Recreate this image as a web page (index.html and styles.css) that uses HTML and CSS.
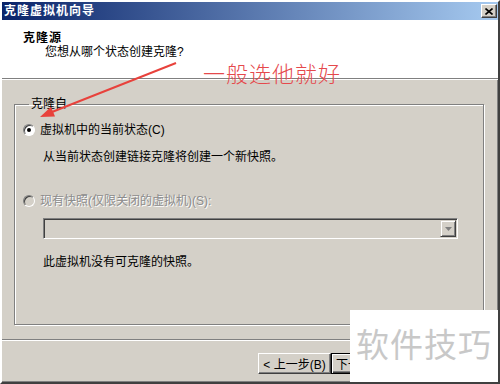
FILE: index.html
```html
<!DOCTYPE html>
<html lang="zh-CN">
<head>
  <meta charset="UTF-8" />
  <title>克隆虚拟机向导</title>
  <link rel="stylesheet" href="styles.css">
</head>
<body>
  <div class="window">
    <div class="titlebar">
      <span class="title">克隆虚拟机向导</span>
      <button class="close-btn">
        <svg width="8" height="7" viewBox="0 0 8 7"><path d="M0.5 0.5 L7.5 6.5 M7.5 0.5 L0.5 6.5" stroke="#000" stroke-width="1.6"/></svg>
      </button>
    </div>

    <div class="header">
      <div class="header-title">克隆源</div>
      <div class="header-sub">您想从哪个状态创建克隆?</div>
    </div>
    <div class="sep"></div>

    <div class="content">
      <fieldset class="group">
        <legend>克隆自</legend>
        <div class="option">
          <span class="radio checked"></span>
          <span>虚拟机中的当前状态(C)</span>
        </div>
        <p class="hint hint-first">从当前状态创建链接克隆将创建一个新快照。</p>
        <div class="option option-second disabled">
          <span class="radio"></span>
          <span>现有快照(仅限关闭的虚拟机)(S):</span>
        </div>
        <div class="combo">
          <span class="combo-field"></span>
          <span class="combo-btn">
            <svg width="7" height="4" viewBox="0 0 7 4"><path d="M0 0 H7 L3.5 4 Z" fill="#808080"/></svg>
          </span>
        </div>
        <p class="hint hint-last">此虚拟机没有可克隆的快照。</p>
      </fieldset>
    </div>

    <div class="sep sep-bottom"></div>
    <div class="buttons">
      <button class="btn">&lt; 上一步(B)</button>
      <button class="btn btn-default">下一步</button>
    </div>

    <div class="annotation">一般选他就好</div>
    <svg class="arrow" width="500" height="384" viewBox="0 0 500 384">
      <line x1="176" y1="63" x2="52" y2="112" stroke="#e8423c" stroke-width="2"/>
      <polygon points="40,117 55,116.5 51,106.8" fill="#e8423c"/>
    </svg>
    <div class="watermark">软件技巧</div>
  </div>
</body>
</html>
```

FILE: styles.css
```css
body {
  margin: 0;
  padding: 0;
  font-family: 'Liberation Sans', 'Noto Sans CJK SC', sans-serif;
  font-size: 12px;
  color: #000;
  background: #d4d0c8;
}

.window {
  position: relative;
  width: 500px;
  height: 384px;
  box-sizing: border-box;
  display: flex;
  flex-direction: column;
  background: #d4d0c8;
  border: 2px solid;
  border-color: #fff #404040 #404040 #fff;
  box-shadow: inset -1px -1px 0 #808080;
  overflow: hidden;
}

.titlebar {
  height: 18px;
  flex-shrink: 0;
  display: flex;
  align-items: center;
  justify-content: space-between;
  padding: 0 1px 0 2px;
  background: linear-gradient(to right, #0a246a, #a6caf0);
}

.title {
  color: #fff;
  font-weight: bold;
  letter-spacing: 1px;
  line-height: 14px;
}

.close-btn {
  width: 16px;
  height: 14px;
  padding: 0;
  display: flex;
  align-items: center;
  justify-content: center;
  background: #d4d0c8;
  border: 1px solid;
  border-color: #fff #404040 #404040 #fff;
  box-shadow: inset -1px -1px 0 #808080;
}

.header {
  height: 58px;
  box-sizing: border-box;
  padding: 11px 0 0 21px;
  background: #fff;
  line-height: 14px;
}

.header-title {
  font-weight: bold;
  letter-spacing: 1px;
}

.header-sub {
  margin-left: 22px;
}

.sep {
  flex-shrink: 0;
  border-top: 1px solid #808080;
  border-bottom: 1px solid #fff;
}

.content {
  padding: 0 14px 0 12px;
}

.group {
  margin: 17px 0 0 0;
  padding: 11px 0 55px 8px;
  border: 1px solid #808080;
  box-shadow: inset 1px 1px 0 #fff, 1px 1px 0 #fff;
  line-height: 14px;
}

.group legend {
  margin-left: 6px;
  padding: 0 2px;
  line-height: 14px;
}

.option {
  display: flex;
  align-items: center;
  gap: 5px;
  height: 16px;
}

.option-second {
  margin-top: 29px;
}

.disabled {
  color: #8c8c8c;
  text-shadow: 1px 1px 0 #fff;
}

.radio {
  position: relative;
  width: 12px;
  height: 12px;
  box-sizing: border-box;
  border-radius: 50%;
  background: #fff;
  border: 1px solid;
  border-color: #808080 #fff #fff #808080;
  box-shadow: inset 1px 1px 0 #404040;
}

.disabled .radio {
  background: #d4d0c8;
}

.radio.checked::after {
  content: '';
  position: absolute;
  left: 3px;
  top: 3px;
  width: 4px;
  height: 4px;
  border-radius: 50%;
  background: #000;
}

.hint {
  margin: 0 0 0 20px;
}

.hint-first {
  margin-top: 12px;
}

.hint-last {
  margin-top: 16px;
}

.combo {
  display: flex;
  width: 415px;
  height: 21px;
  box-sizing: border-box;
  margin: 9px 0 0 20px;
  padding: 1px;
  border: 1px solid;
  border-color: #808080 #fff #fff #808080;
  box-shadow: inset 1px 1px 0 #404040;
  background: #d4d0c8;
}

.combo-field {
  flex: 1;
}

.combo-btn {
  width: 16px;
  height: 17px;
  box-sizing: border-box;
  display: flex;
  align-items: center;
  justify-content: center;
  border: 1px solid;
  border-color: #d4d0c8 #404040 #404040 #d4d0c8;
  box-shadow: inset 1px 1px 0 #fff, inset -1px -1px 0 #808080;
}

.sep-bottom {
  margin-top: 14px;
}

.buttons {
  display: flex;
  justify-content: flex-end;
  padding: 12px 94px 0 0;
}

.btn {
  width: 73px;
  height: 21px;
  padding: 0;
  font-family: 'Liberation Sans', 'Noto Sans CJK SC', sans-serif;
  font-size: 12px;
  color: #000;
  background: #d4d0c8;
  border: 1px solid;
  border-color: #fff #404040 #404040 #fff;
  box-shadow: inset -1px -1px 0 #808080;
}

.btn-default {
  text-align: left;
  padding-left: 4px;
  border-color: #000;
  box-shadow: inset 1px 1px 0 #fff, inset -1px -1px 0 #404040, inset -2px -2px 0 #808080;
}

.annotation {
  position: absolute;
  left: 201px;
  top: 58px;
  font-family: 'Noto Sans CJK SC', sans-serif;
  font-size: 22px;
  font-weight: 300;
  line-height: 24px;
  letter-spacing: 1px;
  color: #e5494c;
}

.arrow {
  position: absolute;
  left: -2px;
  top: -2px;
  pointer-events: none;
}

.watermark {
  position: absolute;
  left: 348px;
  top: 308px;
  width: 152px;
  height: 76px;
  box-sizing: border-box;
  padding: 15px 0 0 6px;
  background: #fff;
  font-family: 'Noto Sans CJK SC', sans-serif;
  font-size: 33px;
  line-height: 36px;
  letter-spacing: 1px;
  color: #c8c8c8;
}
```
